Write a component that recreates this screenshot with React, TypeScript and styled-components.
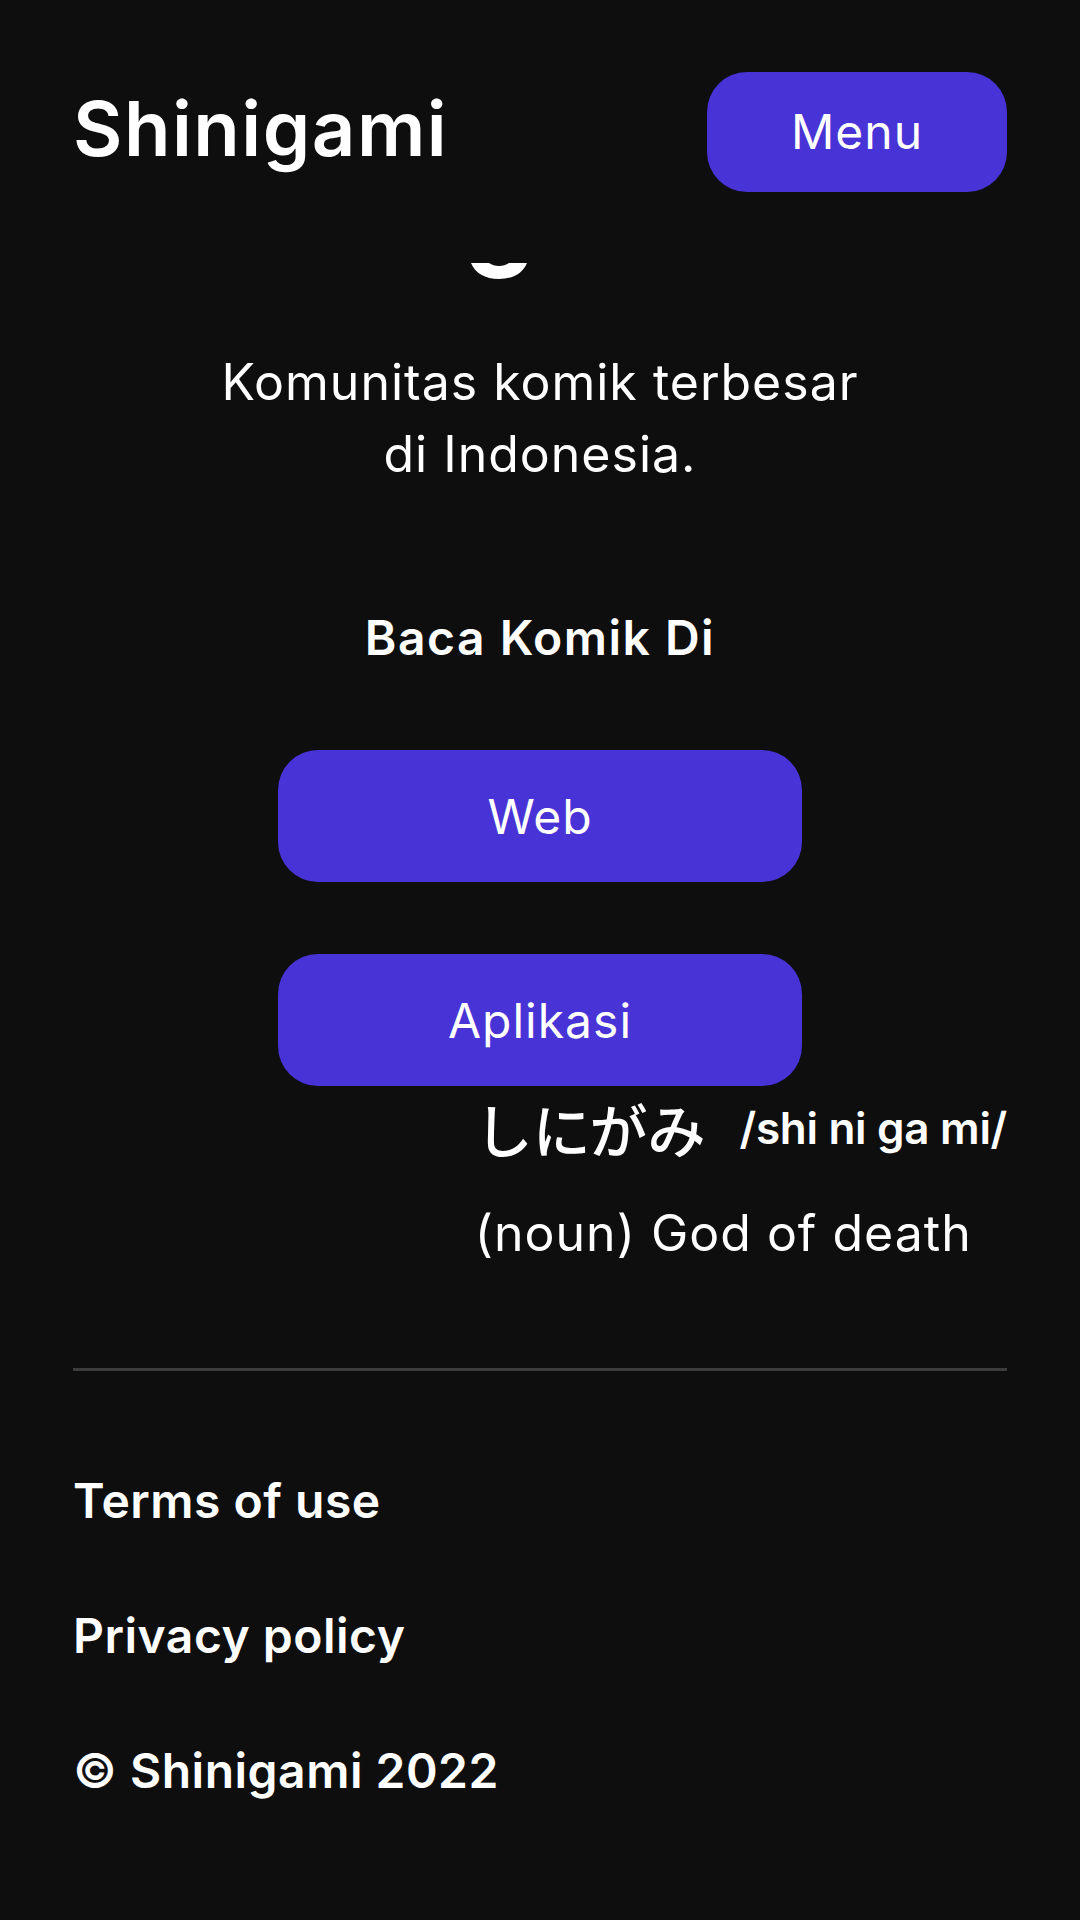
import { createGlobalStyle } from "styled-components";
import styled from "styled-components";

const GlobalStyle = createGlobalStyle`
  html, body {
    margin: 0;
    padding: 0;
    background: #0e0e0e;
  }
  body {
    font-family: Inter, "Noto Sans", "Noto Sans CJK JP", sans-serif;
    color: #ffffff;
  }
  * {
    box-sizing: border-box;
  }
`;

const Page = styled.div`
  width: 1080px;
  min-height: 1920px;
  background: #0e0e0e;
  display: flex;
  flex-direction: column;
`;

const Header = styled.header`
  height: 263px;
  padding: 0 73px 0 73px;
  display: flex;
  align-items: center;
  justify-content: space-between;
`;

const Brand = styled.a`
  font-size: 76px;
  font-weight: 600;
  color: #fff;
  text-decoration: none;
  letter-spacing: 1.5px;
  margin-top: -8px;
`;

const PillButton = styled.button<{ $w: number; $h: number }>`
  width: ${(p) => p.$w}px;
  height: ${(p) => p.$h}px;
  border: none;
  border-radius: 40px;
  background: #4833d6;
  color: #fff;
  font-family: inherit;
  font-size: 48px;
  font-weight: 400;
  letter-spacing: 1px;
  display: flex;
  align-items: center;
  justify-content: center;
  cursor: pointer;
`;

const Hero = styled.section`
  display: flex;
  flex-direction: column;
  align-items: center;
`;

const PeekRow = styled.div`
  align-self: stretch;
  height: 16px;
  padding-left: 471px;
  display: flex;
`;

const Tagline = styled.p`
  margin: 67px 0 0 0;
  font-size: 50px;
  line-height: 72px;
  letter-spacing: 1px;
  text-align: center;
`;

const ReadTitle = styled.h2`
  margin: 118px 0 0 0;
  font-size: 48px;
  line-height: 60px;
  font-weight: 600;
  letter-spacing: 1.5px;
`;

const ButtonStack = styled.div`
  margin-top: 82px;
  display: flex;
  flex-direction: column;
  gap: 72px;
`;

const Definition = styled.div`
  align-self: flex-end;
  margin-right: 73px;
  display: flex;
  flex-direction: column;
  gap: 23px;
`;

const WordRow = styled.div`
  display: flex;
  align-items: baseline;
  gap: 34px;
  height: 84px;
  line-height: 84px;
`;

const Kana = styled.span`
  font-family: "Noto Sans CJK JP", sans-serif;
  font-size: 58px;
  font-weight: 500;
`;

const Reading = styled.span`
  font-size: 44px;
  font-weight: 600;
  letter-spacing: -0.3px;
  position: relative;
  top: -9px;
`;

const Meaning = styled.div`
  font-size: 50px;
  line-height: 80px;
  letter-spacing: 1px;
`;

const Divider = styled.hr`
  margin: 95px 73px 0 73px;
  border: none;
  height: 3px;
  background: #3c3c3c;
`;

const Footer = styled.footer`
  padding: 100px 73px 119px 73px;
  display: flex;
  flex-direction: column;
  gap: 75px;
`;

const FooterLink = styled.a`
  font-size: 48px;
  line-height: 60px;
  font-weight: 600;
  letter-spacing: 0.5px;
  color: #fff;
  text-decoration: none;
`;

const PeekShape = () => (
  <svg width="56" height="16" viewBox="0 0 56 16">
    <path
      d="M0 0 H56 C52 10 42 16 28 16 C14 16 4 10 0 0 Z M18 0 C21 2 24 3 28 3 C32 3 35 2 38 0 Z"
      fill="#fff"
      fillRule="evenodd"
    />
  </svg>
);

export default function App() {
  return (
    <>
      <GlobalStyle />
      <Page>
        <Header>
          <Brand href="#">Shinigami</Brand>
          <PillButton $w={300} $h={120}>
            Menu
          </PillButton>
        </Header>

        <Hero>
          <PeekRow>
            <PeekShape />
          </PeekRow>
          <Tagline>
            Komunitas komik terbesar
            <br />
            di Indonesia.
          </Tagline>
          <ReadTitle>Baca Komik Di</ReadTitle>
          <ButtonStack>
            <PillButton $w={524} $h={132}>
              Web
            </PillButton>
            <PillButton $w={524} $h={132}>
              Aplikasi
            </PillButton>
          </ButtonStack>
          <Definition>
            <WordRow>
              <Kana>しにがみ</Kana>
              <Reading>/shi ni ga mi/</Reading>
            </WordRow>
            <Meaning>(noun) God of death</Meaning>
          </Definition>
        </Hero>

        <Divider />

        <Footer>
          <FooterLink href="#">Terms of use</FooterLink>
          <FooterLink href="#">Privacy policy</FooterLink>
          <FooterLink href="#">© Shinigami 2022</FooterLink>
        </Footer>
      </Page>
    </>
  );
}
